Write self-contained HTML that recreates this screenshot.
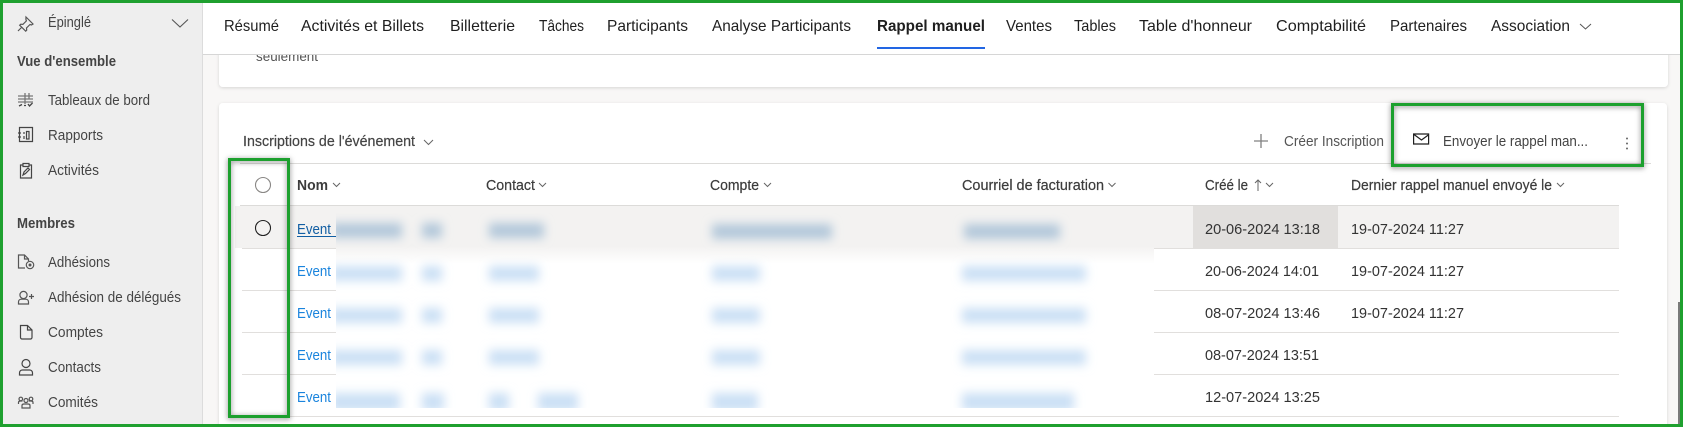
<!DOCTYPE html>
<html lang="fr"><head><meta charset="utf-8"><title>Rappel manuel</title>
<style>html,body{margin:0;padding:0;width:1683px;height:427px;overflow:hidden;background:#f8f7f6}svg{display:block}text{font-family:"Liberation Sans",sans-serif;font-size:15px;fill:#323130}.t{fill:#1f1f1f;font-size:16px}.s{fill:#444}.b{font-weight:700;fill:#444;font-size:14.500px}.h{fill:#3c3c3c;font-size:15px}.hb{fill:#3c3c3c;font-size:15px;font-weight:700}.l{fill:#1a84dd}.d{fill:#333;font-size:15px}.i{fill:none;stroke:#555;stroke-width:1.2}.c{fill:none;stroke:#666;stroke-width:1}</style></head>
<body>
<svg width="1683" height="427" viewBox="0 0 1683 427" xmlns="http://www.w3.org/2000/svg">
<defs>
<filter id="bl" x="-40%" y="-150%" width="180%" height="400%"><feGaussianBlur stdDeviation="5"/></filter>
<filter id="sh" x="-5%" y="-5%" width="110%" height="110%"><feDropShadow dx="0" dy="1" stdDeviation="2.6" flood-color="#000" flood-opacity=".5"/></filter>
<filter id="cs" x="-2%" y="-10%" width="104%" height="120%"><feDropShadow dx="0" dy="1" stdDeviation="1.500" flood-color="#000" flood-opacity=".14"/></filter>
<clipPath id="ov"><rect x="336" y="213" width="818" height="195"/></clipPath>
<linearGradient id="fade" x1="0" y1="0" x2="0" y2="1"><stop offset="0" stop-color="#f3f2f1"/><stop offset=".17" stop-color="#f3f2f1"/><stop offset=".26" stop-color="#fff"/><stop offset="1" stop-color="#fff"/></linearGradient>
</defs>
<rect width="1683" height="427" fill="#f8f7f6"/>

<!-- cards -->
<rect x="219" y="30" width="1449" height="57" rx="4" fill="#fff" filter="url(#cs)"/>
<text x="256" y="61" style="fill:#555;font-size:14px" textLength="62" lengthAdjust="spacingAndGlyphs">seulement</text>
<rect x="219" y="103" width="1448" height="330" rx="4" fill="#fff" filter="url(#cs)"/>

<!-- sidebar -->
<rect x="0" y="0" width="202" height="427" fill="#eeeeee"/>
<rect x="202" y="0" width="1" height="427" fill="#dcdcdc"/>
<path class="i" d="M26 17l7 7-1.500 1-1.500-.5-3.500 3.500.2 2.200-1 1-6-6 1-1 2.200.2 3.500-3.500-.5-1.500zM22 27l-4 4"/>
<text x="48" y="27" class="s" textLength="43" lengthAdjust="spacingAndGlyphs">Épinglé</text>
<path d="M172 19.500l8 7.500 8-7.500" fill="none" stroke="#555" stroke-width="1.100"/>
<text x="17" y="66" class="b" textLength="99" lengthAdjust="spacingAndGlyphs">Vue d'ensemble</text>
<path d="M18 96h15M18 99h15M18 102h15M25 93v11M29 93v6" fill="none" stroke="#777" stroke-width="1.300"/><path d="M19 106l3-1.500M24 105.500h2M28 104l1.500 2 3-3" fill="none" stroke="#444" stroke-width="1.300"/>
<text x="48" y="105" class="s" textLength="102" lengthAdjust="spacingAndGlyphs">Tableaux de bord</text>
<path class="i" d="M19.500 127.500h13v14h-13zM18 133h3M18 137h3M24 136v3M26.500 131.500h2.500v7.500h-2.500zM24 132v2" style="stroke:#444"/>
<text x="48" y="140" class="s" textLength="55" lengthAdjust="spacingAndGlyphs">Rapports</text>
<path class="i" d="M23 165h-2.500v13h11v-13H29M23 163.500h6v3h-6zM23 175l1-3 4-4 1.500 1.500-4 4z" style="stroke:#444"/>
<text x="48" y="175" class="s" textLength="51" lengthAdjust="spacingAndGlyphs">Activités</text>
<text x="17" y="228" class="b" textLength="58" lengthAdjust="spacingAndGlyphs">Membres</text>
<path class="i" d="M25 268h-6.500v-13h6l4 4v2M24.500 255v4h4"/><circle class="i" cx="30" cy="265" r="3.700"/><circle cx="30" cy="265" r="1.500" fill="#555"/>
<text x="48" y="267" class="s" textLength="62" lengthAdjust="spacingAndGlyphs">Adhésions</text>
<circle class="i" cx="23.500" cy="295" r="3.600"/><path class="i" d="M18.500 304v-2c0-2 1.500-2.800 3-2.800h4c1.500 0 3 .8 3 2.800v2zM29 296.500h5M31.500 294v5"/>
<text x="48" y="302" class="s" textLength="133" lengthAdjust="spacingAndGlyphs">Adhésion de délégués</text>
<path class="i" d="M20.500 325.500h7l4.500 4.500v7.500a1.500 1.500 0 0 1-1.500 1.500h-8.500a1.500 1.500 0 0 1-1.500-1.500zM27.500 325.500v4.500h4.500" style="stroke:#444"/>
<text x="48" y="337" class="s" textLength="55" lengthAdjust="spacingAndGlyphs">Comptes</text>
<circle class="i" cx="26" cy="363.500" r="4" style="stroke:#444"/><path class="i" d="M19.500 375v-2c0-2 1.500-3 3-3h7c1.500 0 3 1 3 3v2z" style="stroke:#444"/>
<text x="48" y="372" class="s" textLength="53" lengthAdjust="spacingAndGlyphs">Contacts</text>
<path class="i" d="M18.500 404v-1.500c0-1 1-1.500 2-1.500h2M33 404v-1.500c0-1-1-1.500-2-1.500h-2M22 408v-2.500c0-1 1-1.500 2-1.500h4c1 0 2 .5 2 1.500v2.500z" stroke-width="1"/><circle class="i" cx="20.800" cy="399" r="1.800"/><circle class="i" cx="26" cy="400.500" r="2"/><circle class="i" cx="31" cy="399" r="1.800"/>
<text x="48" y="407" class="s" textLength="50" lengthAdjust="spacingAndGlyphs">Comités</text>

<!-- command bar -->
<text x="243" y="146" style="fill:#444;font-size:15px;stroke:#444;stroke-width:.2" textLength="172" lengthAdjust="spacingAndGlyphs">Inscriptions de l'événement</text>
<path d="M424 140l4.500 4.500 4.500-4.500" fill="none" stroke="#666" stroke-width="1"/>
<path d="M1254 141h14M1261 134v14" stroke="#808080" stroke-width="1.300" fill="none"/>
<text x="1284" y="146" style="fill:#555;font-size:15px" textLength="100" lengthAdjust="spacingAndGlyphs">Créer Inscription</text>
<path d="M1413.600 134h15v10h-15zM1414 134.500l7.500 5.500 7.500-5.500" fill="none" stroke="#1f1f1f" stroke-width="1.200"/>
<text x="1443" y="146" style="fill:#444;font-size:15px" textLength="145" lengthAdjust="spacingAndGlyphs">Envoyer le rappel man...</text>
<circle cx="1627" cy="138.500" r="1" fill="#666"/><circle cx="1627" cy="143.500" r="1" fill="#666"/><circle cx="1627" cy="148.500" r="1" fill="#666"/>
<rect x="240" y="163" width="1411" height="1" fill="#dcdbd9"/>

<!-- table header -->
<text x="297" y="190" class="hb" textLength="31" lengthAdjust="spacingAndGlyphs">Nom</text><path class="c" d="M333 183l3.500 3.500 3.500-3.500"/>
<text x="486" y="190" class="h" style="stroke:#3c3c3c;stroke-width:.2" textLength="49" lengthAdjust="spacingAndGlyphs">Contact</text><path class="c" d="M539 183l3.500 3.500 3.500-3.500"/>
<text x="710" y="190" class="h" style="stroke:#3c3c3c;stroke-width:.2" textLength="49" lengthAdjust="spacingAndGlyphs">Compte</text><path class="c" d="M764 183l3.500 3.500 3.500-3.500"/>
<text x="962" y="190" class="h" style="stroke:#3c3c3c;stroke-width:.2" textLength="142" lengthAdjust="spacingAndGlyphs">Courriel de facturation</text><path class="c" d="M1108.500 183l3.500 3.500 3.500-3.500"/>
<text x="1205" y="190" class="h" style="stroke:#3c3c3c;stroke-width:.2" textLength="43" lengthAdjust="spacingAndGlyphs">Créé le</text><path class="c" d="M1258 191v-11M1255 183l3-3 3 3"/><path class="c" d="M1266 183l3.500 3.500 3.500-3.500"/>
<text x="1351" y="190" class="h" style="stroke:#3c3c3c;stroke-width:.2" textLength="201" lengthAdjust="spacingAndGlyphs">Dernier rappel manuel envoyé le</text><path class="c" d="M1557 183l3.500 3.500 3.500-3.500"/>
<rect x="240" y="205" width="1379" height="1" fill="#dcdbd9"/>

<!-- rows -->
<rect x="235" y="206" width="1384" height="42" fill="#f3f2f1"/>
<rect x="1193" y="206" width="145" height="42" fill="#e1dfdd"/>
<rect x="242" y="248" width="1377" height="1" fill="#e1dfdd"/>
<rect x="242" y="290" width="1377" height="1" fill="#e1dfdd"/>
<rect x="242" y="332" width="1377" height="1" fill="#e1dfdd"/>
<rect x="242" y="374" width="1377" height="1" fill="#e1dfdd"/>
<rect x="242" y="416" width="1377" height="1" fill="#e1dfdd"/>
<circle cx="263" cy="185" r="7.500" fill="none" stroke="#8a8886" stroke-width="1.100"/>
<circle cx="263" cy="228" r="7.500" fill="none" stroke="#222" stroke-width="1.100"/>

<text x="297" y="234" style="fill:#115ea3;font-size:15px" textLength="34" lengthAdjust="spacingAndGlyphs">Event</text><rect x="297" y="236" width="40" height="1" fill="#115ea3"/>
<text x="297" y="276" class="l" textLength="34" lengthAdjust="spacingAndGlyphs">Event</text>
<text x="297" y="318" class="l" textLength="34" lengthAdjust="spacingAndGlyphs">Event</text>
<text x="297" y="360" class="l" textLength="34" lengthAdjust="spacingAndGlyphs">Event</text>
<text x="297" y="402" class="l" textLength="34" lengthAdjust="spacingAndGlyphs">Event</text>

<text x="1205" y="234" class="d" textLength="115" lengthAdjust="spacingAndGlyphs">20-06-2024 13:18</text>
<text x="1351" y="234" class="d" textLength="113" lengthAdjust="spacingAndGlyphs">19-07-2024 11:27</text>
<text x="1205" y="276" class="d" textLength="114" lengthAdjust="spacingAndGlyphs">20-06-2024 14:01</text>
<text x="1351" y="276" class="d" textLength="113" lengthAdjust="spacingAndGlyphs">19-07-2024 11:27</text>
<text x="1205" y="318" class="d" textLength="115" lengthAdjust="spacingAndGlyphs">08-07-2024 13:46</text>
<text x="1351" y="318" class="d" textLength="113" lengthAdjust="spacingAndGlyphs">19-07-2024 11:27</text>
<text x="1205" y="360" class="d" textLength="114" lengthAdjust="spacingAndGlyphs">08-07-2024 13:51</text>
<text x="1205" y="402" class="d" textLength="115" lengthAdjust="spacingAndGlyphs">12-07-2024 13:25</text>

<!-- blurred overlay -->
<g clip-path="url(#ov)">
<rect x="336" y="213" width="818" height="195" fill="url(#fade)"/>
<g filter="url(#bl)" fill="#b3c8da">
<rect x="330" y="223" width="72" height="15"/><rect x="422" y="223" width="20" height="15"/><rect x="489" y="223" width="55" height="15"/><rect x="712" y="224" width="120" height="15"/><rect x="964" y="224" width="96" height="15"/>
</g>
<g filter="url(#bl)" fill="#cbe0f5">
<rect x="330" y="266" width="72" height="15"/><rect x="422" y="266" width="20" height="15"/><rect x="489" y="266" width="50" height="15"/><rect x="712" y="266" width="48" height="15"/><rect x="962" y="266" width="124" height="15"/>
<rect x="330" y="308" width="72" height="15"/><rect x="422" y="308" width="20" height="15"/><rect x="489" y="308" width="50" height="15"/><rect x="712" y="308" width="48" height="15"/><rect x="962" y="308" width="124" height="15"/>
<rect x="330" y="350" width="72" height="15"/><rect x="422" y="350" width="20" height="15"/><rect x="489" y="350" width="50" height="15"/><rect x="712" y="350" width="48" height="15"/><rect x="962" y="350" width="124" height="15"/>
<rect x="330" y="393" width="70" height="18"/><rect x="422" y="393" width="22" height="18"/><rect x="489" y="393" width="20" height="18"/><rect x="538" y="393" width="40" height="18"/><rect x="712" y="393" width="46" height="18"/><rect x="962" y="393" width="112" height="18"/>
</g>
</g>

<!-- header -->
<rect x="203" y="0" width="1477" height="54" fill="#fff"/>
<rect x="203" y="54" width="1477" height="1" fill="#d6d6d6"/>
<text x="224" y="31" class="t" textLength="55" lengthAdjust="spacingAndGlyphs">Résumé</text>
<text x="301" y="31" class="t" textLength="123" lengthAdjust="spacingAndGlyphs">Activités et Billets</text>
<text x="450" y="31" class="t" textLength="65" lengthAdjust="spacingAndGlyphs">Billetterie</text>
<text x="539" y="31" class="t" textLength="45" lengthAdjust="spacingAndGlyphs">Tâches</text>
<text x="607" y="31" class="t" textLength="81" lengthAdjust="spacingAndGlyphs">Participants</text>
<text x="712" y="31" class="t" textLength="139" lengthAdjust="spacingAndGlyphs">Analyse Participants</text>
<text x="877" y="31" class="t" style="font-weight:700" textLength="108" lengthAdjust="spacingAndGlyphs">Rappel manuel</text>
<rect x="877" y="47" width="108" height="2" fill="#2266e3"/>
<text x="1006" y="31" class="t" textLength="46" lengthAdjust="spacingAndGlyphs">Ventes</text>
<text x="1074" y="31" class="t" textLength="42" lengthAdjust="spacingAndGlyphs">Tables</text>
<text x="1139" y="31" class="t" textLength="113" lengthAdjust="spacingAndGlyphs">Table d'honneur</text>
<text x="1276" y="31" class="t" textLength="90" lengthAdjust="spacingAndGlyphs">Comptabilité</text>
<text x="1390" y="31" class="t" textLength="77" lengthAdjust="spacingAndGlyphs">Partenaires</text>
<text x="1491" y="31" class="t" textLength="79" lengthAdjust="spacingAndGlyphs">Association</text>
<path d="M1580 24l5.500 5 5.500-5" fill="none" stroke="#555" stroke-width="1"/>

<!-- scrollbar -->
<rect x="1678" y="302" width="2" height="125" fill="#7a7a7a"/>

<!-- annotations -->
<g fill="none" stroke="#1fa02f" stroke-width="3" filter="url(#sh)">
<rect x="229.500" y="159.500" width="59" height="257"/>
<rect x="1392.500" y="104.500" width="250" height="61"/>
</g>
<rect x="1.500" y="1.500" width="1680" height="424" fill="none" stroke="#1fa02f" stroke-width="3"/>
</svg>
</body></html>
